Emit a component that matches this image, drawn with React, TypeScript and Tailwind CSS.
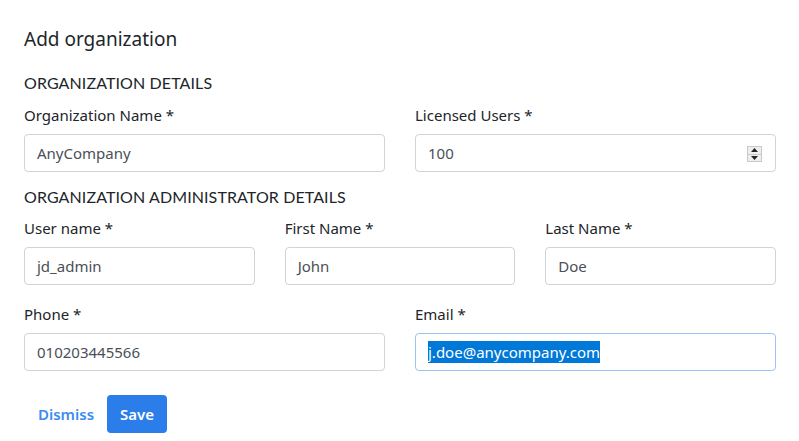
import React from "react";

const labelCls = "text-[15px] leading-[22px] text-[#212529] mb-[8px]";
const inputCls =
  "h-[38px] rounded-[4px] border border-[#ced4da] bg-white px-[12px] flex items-center text-[15px] text-[#495057]";

function Field({ label, value, extra }: { label: string; value: React.ReactNode; extra?: React.ReactNode }) {
  return (
    <div className="flex flex-col">
      <div className={labelCls}>{label}</div>
      <div className={inputCls + " relative"}>
        {value}
        {extra}
      </div>
    </div>
  );
}

function Spinner() {
  return (
    <div className="absolute right-[13px] top-[11px] w-[15px] h-[16px] flex flex-col border border-[#c9c9c9] bg-[#eeeeee]">
      <div className="flex-1 flex items-center justify-center border-b border-[#c9c9c9]">
        <svg width="7" height="4" viewBox="0 0 7 4"><path d="M0 4 L3.5 0 L7 4 Z" fill="#222" /></svg>
      </div>
      <div className="flex-1 flex items-center justify-center">
        <svg width="7" height="4" viewBox="0 0 7 4"><path d="M0 0 L3.5 4 L7 0 Z" fill="#222" /></svg>
      </div>
    </div>
  );
}

const headingCls = "text-[16px] leading-[20px] text-[#212529] tracking-[0.1px]";
const headingFont = { fontFamily: 'Lato, "Noto Sans", sans-serif' };

export default function App() {
  return (
    <div
      className="w-[799px] h-[441px] bg-white overflow-hidden"
      style={{ fontFamily: '"Noto Sans", "Open Sans", sans-serif' }}
    >
      <div className="pl-[24px] pr-[23px] pt-[25px]">
        <h1 className="text-[19px] leading-[28px] text-[#212529]">Add organization</h1>
        <div className={"mt-[20px] " + headingCls} style={headingFont}>
          ORGANIZATION DETAILS
        </div>
        <div className="mt-[11px] grid grid-cols-2 gap-x-[30px]">
          <Field label="Organization Name *" value="AnyCompany" />
          <Field label="Licensed Users *" value="100" extra={<Spinner />} />
        </div>
        <div className={"mt-[15px] " + headingCls} style={headingFont}>
          ORGANIZATION ADMINISTRATOR DETAILS
        </div>
        <div className="mt-[10px] grid grid-cols-3 gap-x-[30px]">
          <Field label="User name *" value="jd_admin" />
          <Field label="First Name *" value="John" />
          <Field label="Last Name *" value="Doe" />
        </div>
        <div className="mt-[18px] grid grid-cols-2 gap-x-[30px]">
          <Field label="Phone *" value="010203445566" />
          <div className="flex flex-col">
            <div className={labelCls}>Email *</div>
            <div className="h-[38px] rounded-[4px] border border-[#9ec2f5] bg-white px-[12px] flex items-center text-[15px]">
              <span className="bg-[#0078d7] text-white leading-[22px]">j.doe@anycompany.com</span>
            </div>
          </div>
        </div>
        <div className="mt-[24px] flex items-center">
          <button className="pl-[14px] pr-[13px] h-[38px] text-[15px] font-semibold text-[#3d8bf0]">Dismiss</button>
          <button className="px-[13px] h-[38px] rounded-[4px] bg-[#2b7de9] text-white text-[15px] font-semibold">Save</button>
        </div>
      </div>
    </div>
  );
}
